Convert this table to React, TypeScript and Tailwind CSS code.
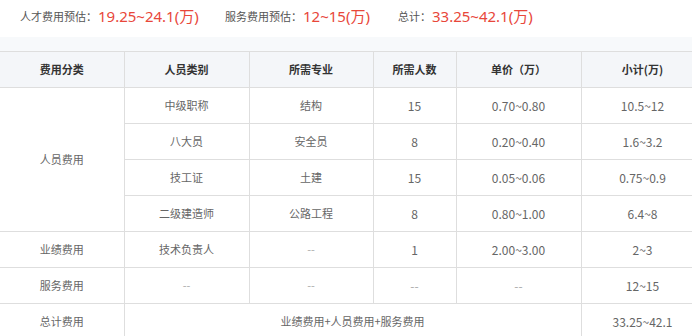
import React from "react";

const font = { fontFamily: '"Noto Sans CJK SC", "Noto Sans", sans-serif' };
const numFont = { fontFamily: '"Noto Sans", "Noto Sans CJK SC", sans-serif' };

type Row = { cat?: { text: string; rowSpan?: number }; cells: string[] };

const rows: Row[] = [
  { cat: { text: "人员费用", rowSpan: 4 }, cells: ["中级职称", "结构", "15", "0.70~0.80", "10.5~12"] },
  { cells: ["八大员", "安全员", "8", "0.20~0.40", "1.6~3.2"] },
  { cells: ["技工证", "土建", "15", "0.05~0.06", "0.75~0.9"] },
  { cells: ["二级建造师", "公路工程", "8", "0.80~1.00", "6.4~8"] },
  { cat: { text: "业绩费用" }, cells: ["技术负责人", "--", "1", "2.00~3.00", "2~3"] },
  { cat: { text: "服务费用" }, cells: ["--", "--", "--", "--", "12~15"] },
];

const td = "border border-[#dedede] text-center align-middle p-0 h-[36px]";

export default function App() {
  return (
    <div className="w-[692px] h-[336px] overflow-hidden bg-white" style={font}>
      <div className="h-[37px] flex items-center pb-[5px] pl-[20px] text-[11px] text-[#555]">
        <span>人才费用预估：</span>
        <span className="text-[15px] text-[#e8473a] ml-[1px] w-[98px]" style={numFont}>19.25~24.1(万)</span>
        <span className="ml-[29px]">服务费用预估：</span>
        <span className="text-[15px] text-[#e8473a] ml-[1px] w-[66px]" style={numFont}>12~15(万)</span>
        <span className="ml-[29px]">总计：</span>
        <span className="text-[15px] text-[#e8473a] ml-[1px]" style={numFont}>33.25~42.1(万)</span>
      </div>
      <div className="h-[14px] bg-[#f7f9fb]" />
      <table className="border-collapse w-[704px] table-fixed text-[11px]">
        <colgroup>
          <col className="w-[124px]" />
          <col className="w-[125px]" />
          <col className="w-[124px]" />
          <col className="w-[83px]" />
          <col className="w-[125px]" />
          <col className="w-[123px]" />
        </colgroup>
        <thead>
          <tr className="bg-[#f4f6f9] text-[#333] font-semibold">
            <th className={td + " border-l-0"}>费用分类</th>
            <th className={td}>人员类别</th>
            <th className={td}>所需专业</th>
            <th className={td}>所需人数</th>
            <th className={td}>单价（万）</th>
            <th className={td}>小计(万)</th>
          </tr>
        </thead>
        <tbody className="text-[#666]">
          {rows.map((r, i) => (
            <tr key={i}>
              {r.cat && (
                <td className={td + " border-l-0"} rowSpan={r.cat.rowSpan}>
                  {r.cat.text}
                </td>
              )}
              {r.cells.map((c, j) => (
                <td
                  key={j}
                  className={td + (c === "--" ? " text-[#aaa]" : "") + (j >= 2 ? " text-[12px]" : "")}
                >
                  {c}
                </td>
              ))}
            </tr>
          ))}
          <tr>
            <td className={td + " border-l-0"}>总计费用</td>
            <td className={td} colSpan={4}>业绩费用+人员费用+服务费用</td>
            <td className={td + " text-[12px]"}>33.25~42.1</td>
          </tr>
        </tbody>
      </table>
    </div>
  );
}
